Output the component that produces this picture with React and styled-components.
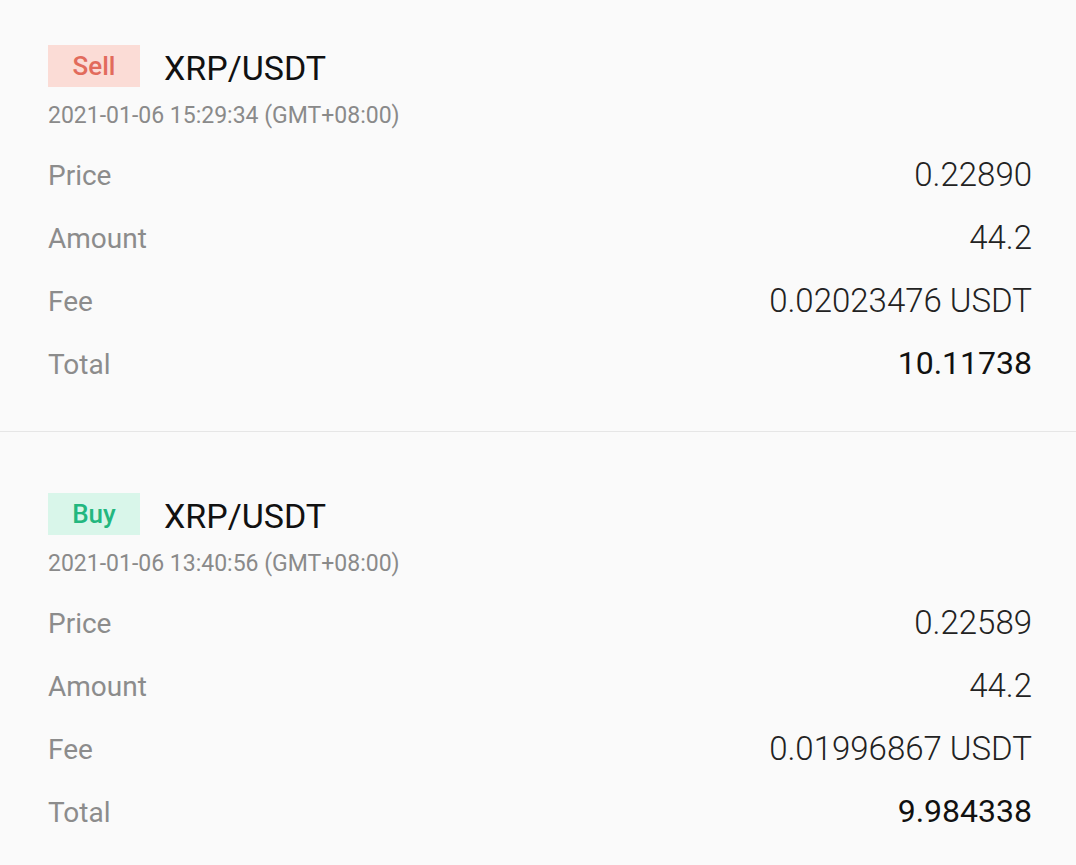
import React from 'react';
import styled, { createGlobalStyle } from 'styled-components';

const GlobalStyle = createGlobalStyle`
    html, body {
        margin: 0;
        padding: 0;
        background: #fafafa;
    }
    body {
        font-family: Roboto, "Noto Sans", sans-serif;
    }
`;

const List = styled.div`
    width: 1076px;
    background: #fafafa;
`;

const Card = styled.section`
    padding: 45px 44px 35px 48px;
`;

const Divider = styled.div`
    height: 1px;
    background: #e6e6e6;
    margin-bottom: 16px;
`;

const Header = styled.div`
    display: flex;
    align-items: center;
    height: 42px;
`;

const Badge = styled.span`
    display: flex;
    align-items: center;
    justify-content: center;
    width: 92px;
    height: 42px;
    font-size: 26px;
    font-weight: 500;
    color: ${({ side }) => (side === 'sell' ? '#e26b5c' : '#23b77f')};
    background: ${({ side }) => (side === 'sell' ? '#fbdcd6' : '#d9f6ea')};
`;

const Pair = styled.span`
    margin-left: 24px;
    margin-top: 4px;
    font-size: 34px;
    color: #111;
`;

const Time = styled.div`
    margin-top: 14px;
    margin-bottom: 13px;
    line-height: 30px;
    font-size: 23px;
    color: #8a8a8a;
`;

const Row = styled.div`
    display: flex;
    align-items: center;
    justify-content: space-between;
    height: 63px;
`;

const Label = styled.span`
    font-size: 28px;
    color: #8c8c8c;
`;

const Value = styled.span`
    margin-top: -3px;
    font-size: ${({ strong }) => (strong ? '32px' : '33px')};
    font-weight: ${({ strong }) => (strong ? 400 : 300)};
    color: ${({ strong }) => (strong ? '#111' : '#222')};
`;

const trades = [
    {
        side: 'sell',
        pair: 'XRP/USDT',
        time: '2021-01-06 15:29:34 (GMT+08:00)',
        price: '0.22890',
        amount: '44.2',
        fee: '0.02023476 USDT',
        total: '10.11738',
    },
    {
        side: 'buy',
        pair: 'XRP/USDT',
        time: '2021-01-06 13:40:56 (GMT+08:00)',
        price: '0.22589',
        amount: '44.2',
        fee: '0.01996867 USDT',
        total: '9.984338',
    },
];

const Trade = ({ trade }) => (
    <Card>
        <Header>
            <Badge side={trade.side}>{trade.side === 'sell' ? 'Sell' : 'Buy'}</Badge>
            <Pair>{trade.pair}</Pair>
        </Header>
        <Time>{trade.time}</Time>
        <Row>
            <Label>Price</Label>
            <Value>{trade.price}</Value>
        </Row>
        <Row>
            <Label>Amount</Label>
            <Value>{trade.amount}</Value>
        </Row>
        <Row>
            <Label>Fee</Label>
            <Value>{trade.fee}</Value>
        </Row>
        <Row>
            <Label>Total</Label>
            <Value strong>{trade.total}</Value>
        </Row>
    </Card>
);

const App = () => {
    return (
        <>
            <GlobalStyle />
            <List>
                {trades.map((t, i) => (
                    <React.Fragment key={i}>
                        <Trade trade={t} />
                        {i < trades.length - 1 && <Divider />}
                    </React.Fragment>
                ))}
            </List>
        </>
    );
};

export default App;
